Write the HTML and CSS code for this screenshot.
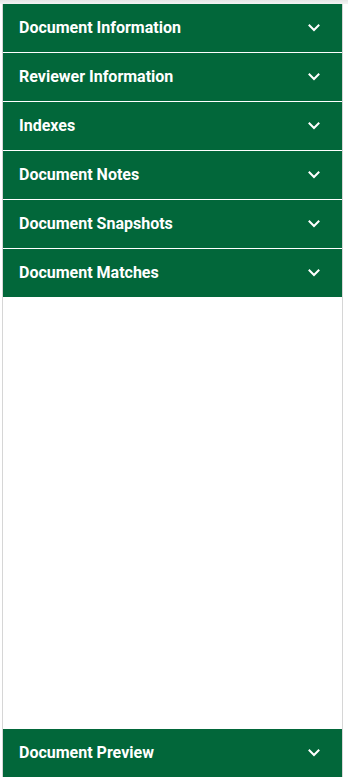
FILE: index.html
```html
<!DOCTYPE html>
<html>
<head>
<meta charset="utf-8">
<link rel="stylesheet" href="styles.css">
</head>
<body>
<div class="topband"></div>
<div class="panel">
  <div class="acc">
    <div class="hdr"><span class="ttl">Document Information</span><svg class="chev" viewBox="0 0 12 8"><path d="M1.5 1.5 L6 6 L10.5 1.5"/></svg></div>
    <div class="hdr"><span class="ttl">Reviewer Information</span><svg class="chev" viewBox="0 0 12 8"><path d="M1.5 1.5 L6 6 L10.5 1.5"/></svg></div>
    <div class="hdr"><span class="ttl">Indexes</span><svg class="chev" viewBox="0 0 12 8"><path d="M1.5 1.5 L6 6 L10.5 1.5"/></svg></div>
    <div class="hdr"><span class="ttl">Document Notes</span><svg class="chev" viewBox="0 0 12 8"><path d="M1.5 1.5 L6 6 L10.5 1.5"/></svg></div>
    <div class="hdr"><span class="ttl">Document Snapshots</span><svg class="chev" viewBox="0 0 12 8"><path d="M1.5 1.5 L6 6 L10.5 1.5"/></svg></div>
    <div class="hdr last"><span class="ttl">Document Matches</span><svg class="chev" viewBox="0 0 12 8"><path d="M1.5 1.5 L6 6 L10.5 1.5"/></svg></div>
  </div>
  <div class="spacer"></div>
  <div class="hdr last"><span class="ttl">Document Preview</span><svg class="chev" viewBox="0 0 12 8"><path d="M1.5 1.5 L6 6 L10.5 1.5"/></svg></div>
</div>
</body>
</html>
```
FILE: styles.css
```css
html, body {
  margin: 0;
  padding: 0;
  background: #ffffff;
  font-family: Roboto, "Liberation Sans", sans-serif;
}
.topband {
  height: 4px;
  background: linear-gradient(#e6e6e6, #f3f3f3);
}
.panel {
  margin-left: 2px;
  width: 339px;
  height: 773px;
  border-left: 1px solid #d6d6d6;
  border-right: 1px solid #d6d6d6;
  display: flex;
  flex-direction: column;
}
.acc {
  display: flex;
  flex-direction: column;
}
.hdr {
  height: 48px;
  background: #02673a;
  border-bottom: 1px solid #ffffff;
  display: flex;
  align-items: center;
  justify-content: space-between;
  padding: 0 22px 0 16px;
  color: #ffffff;
  font-weight: 700;
  font-size: 16px;
  flex-shrink: 0;
}
.ttl {
  margin-bottom: 2px;
}
.hdr.last {
  border-bottom: none;
}
.spacer {
  flex: 1;
}
.chev {
  width: 12px;
  height: 8px;
  fill: none;
  stroke: #ffffff;
  stroke-width: 2;
  stroke-linecap: square;
}
```
